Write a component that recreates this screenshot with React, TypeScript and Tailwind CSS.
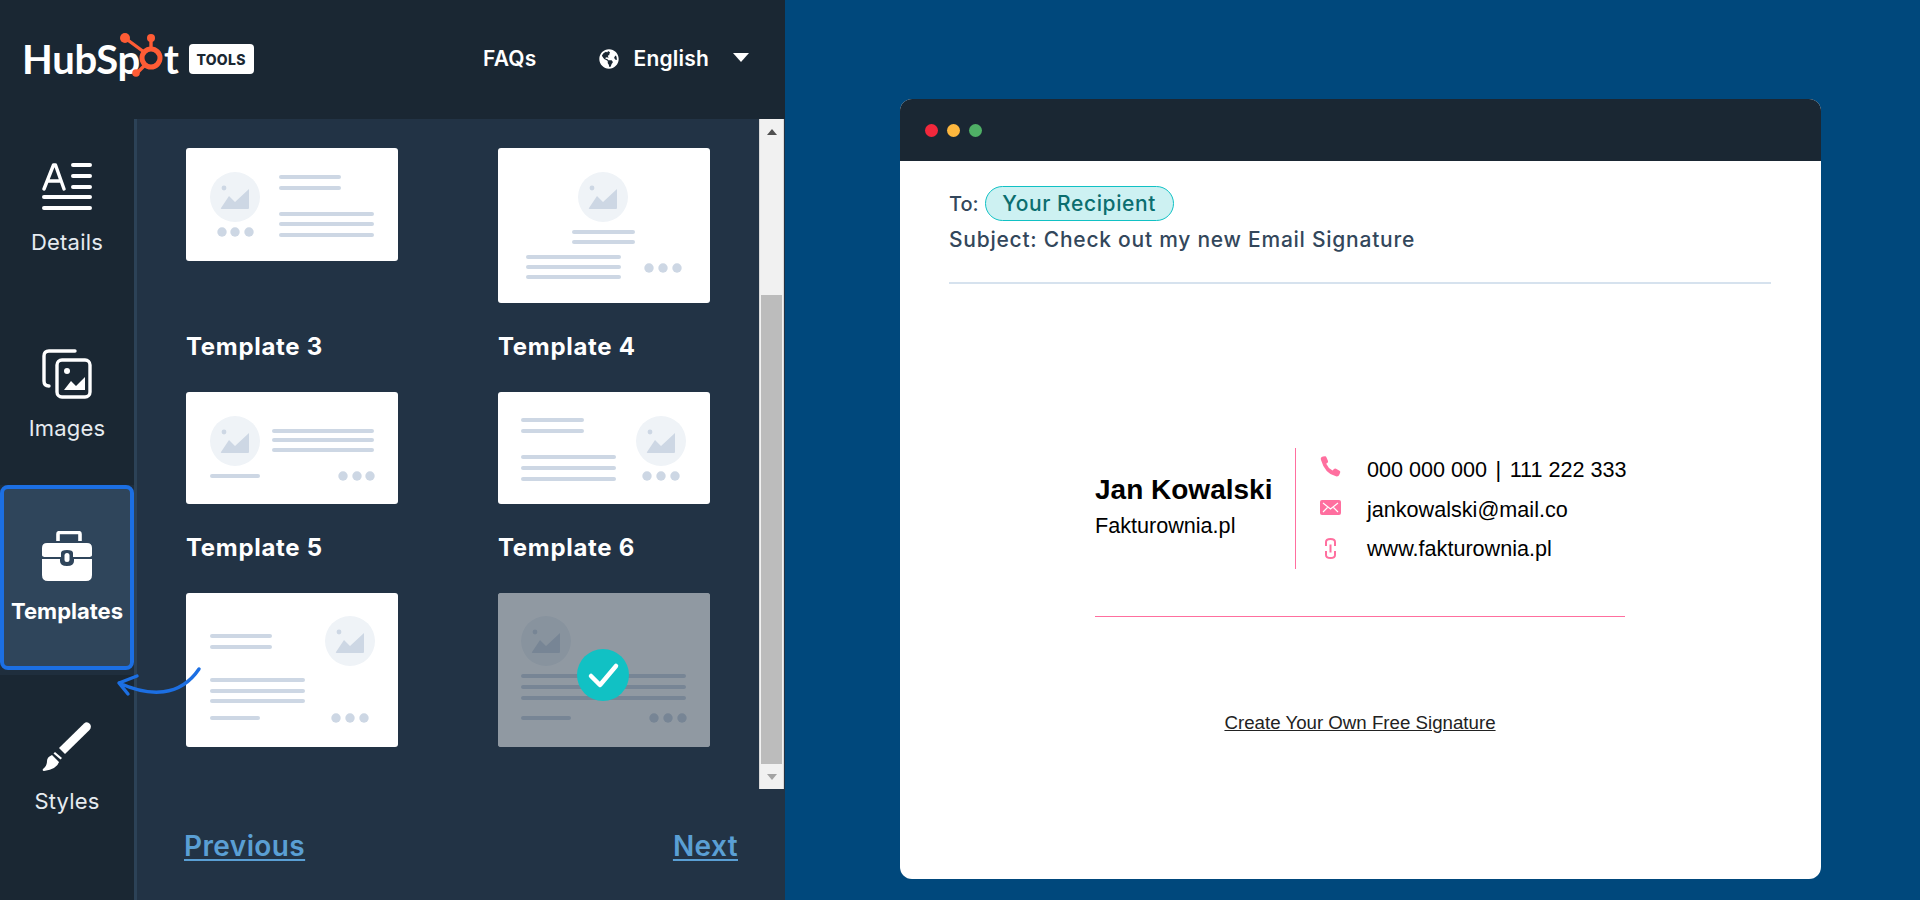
import { FaGlobeAmericas } from 'react-icons/fa'

const LINE = '#cdd7e4'

interface Bar { x1: number; x2: number; y: number }

interface Thumb {
  name?: string
  h: number
  circle: number
  circleY: number
  dots: { x: number[]; y: number }
  bars: Bar[]
  selected?: boolean
}

const bars = (x1: number, x2: number, ys: number[]) => ys.map(y => ({ x1, x2, y }))

const thumbs: Thumb[] = [
  {
    h: 113, circle: 49, circleY: 49,
    dots: { x: [36, 49, 63], y: 84 },
    bars: [...bars(93, 155, [29, 40]), ...bars(93, 188, [66, 76, 87])],
  },
  {
    h: 155, circle: 105, circleY: 49,
    dots: { x: [151, 165, 179], y: 120 },
    bars: [...bars(74, 137, [84, 94]), ...bars(28, 123, [109, 119, 129])],
  },
  {
    name: 'Template 3', h: 112, circle: 49, circleY: 49,
    dots: { x: [157, 171, 184], y: 84 },
    bars: [...bars(86, 188, [39, 48, 58]), ...bars(24, 74, [84])],
  },
  {
    name: 'Template 4', h: 112, circle: 163, circleY: 49,
    dots: { x: [149, 163, 177], y: 84 },
    bars: [...bars(23, 86, [28, 39]), ...bars(23, 118, [65, 76, 87])],
  },
  {
    name: 'Template 5', h: 154, circle: 164, circleY: 48,
    dots: { x: [150, 164, 178], y: 125 },
    bars: [...bars(24, 86, [43, 54]), ...bars(24, 119, [87, 98, 108]), ...bars(24, 74, [125])],
  },
  {
    name: 'Template 6', h: 154, circle: 48, circleY: 48, selected: true,
    dots: { x: [156, 170, 184], y: 125 },
    bars: [...bars(23, 188, [83, 94, 105]), ...bars(23, 73, [125])],
  },
]

function ThumbCard({ t }: { t: Thumb }) {
  const cx = t.circle
  const cy = t.circleY
  return (
    <svg width={212} height={t.h} viewBox={`0 0 212 ${t.h}`} className="block rounded-[3px]">
      <rect width={212} height={t.h} fill="#fff" />
      <circle cx={cx} cy={cy} r={25} fill="#eff3f7" />
      <circle cx={cx - 11} cy={cy - 9} r={2.4} fill={LINE} />
      <path d={`M${cx - 14} ${cy + 11} L${cx - 6} ${cy - 1} L${cx} ${cy + 5} L${cx + 14} ${cy - 8} V${cy + 11} Q${cx + 14} ${cy + 12} ${cx + 13} ${cy + 12} H${cx - 13} Q${cx - 15} ${cy + 12} ${cx - 14} ${cy + 11} Z`} fill={LINE} />
      {t.bars.map((b, i) => (
        <rect key={i} x={b.x1} y={b.y - 2} width={b.x2 - b.x1} height={4} rx={2} fill={LINE} />
      ))}
      {t.dots.x.map(x => (
        <circle key={x} cx={x} cy={t.dots.y} r={4.7} fill={LINE} />
      ))}
      {t.selected && (
        <>
          <rect width={212} height={t.h} fill="#213345" fillOpacity={0.5} />
          <circle cx={105} cy={82} r={26} fill="#11c1c4" />
          <path d="M93 83 L102 92 L118 73" fill="none" stroke="#fff" strokeWidth={4.5} strokeLinecap="round" strokeLinejoin="round" />
        </>
      )}
    </svg>
  )
}

function Logo() {
  return (
    <div className="flex items-center">
      <div className="relative flex items-center text-[40px] leading-[38px] font-bold text-white tracking-[-0.3px] [font-family:Lato,sans-serif]">
        <span>HubSp</span>
        <span className="w-[24px]" />
        <span>t</span>
        <svg width={50} height={54} viewBox="0 0 50 54" className="absolute left-[98px] top-[-14px]" fill="none">
          <circle cx={31} cy={32} r={9} stroke="#ff5c35" strokeWidth={5} />
          <path d="M5 12 L24 26 M31 12 V22 M17 47 L25 39" stroke="#ff5c35" strokeWidth={3.4} />
          <circle cx={5} cy={12} r={5} fill="#ff5c35" />
          <circle cx={31} cy={12} r={4} fill="#ff5c35" />
          <circle cx={16} cy={47} r={3.8} fill="#ff5c35" />
        </svg>
      </div>
      <span className="ml-[10px] w-[65px] h-[30px] rounded-[4px] bg-white text-[#1a2733] text-[14px] font-extrabold tracking-[0.3px] flex items-center justify-center">
        TOOLS
      </span>
    </div>
  )
}

function DetailsIcon() {
  return (
    <svg width={50} height={50} viewBox="0 0 50 50" fill="none" stroke="#fff" strokeWidth={3.4} strokeLinecap="round" strokeLinejoin="round">
      <path d="M2 26 L11.5 2 H13.5 L22 26 M6 18 H18.5" />
      <path d="M31 2 H48 M31 13 H48 M31 24 H48 M2 34 H48 M2 45 H48" strokeWidth={4} />
    </svg>
  )
}

function ImagesIcon() {
  return (
    <svg width={50} height={50} viewBox="0 0 50 50" fill="none">
      <path d="M33 2 H7 Q2 2 2 7 V32 Q2 37 7 37" stroke="#fff" strokeWidth={3.4} strokeLinecap="round" />
      <rect x={15} y={11} width={33} height={37} rx={5} stroke="#fff" strokeWidth={3.4} />
      <circle cx={25} cy={22} r={3} fill="#fff" />
      <path d="M22 41 L29 32 L34 37 L43 28 V41 Z" fill="#fff" />
    </svg>
  )
}

function BriefcaseIcon() {
  return (
    <svg width={50} height={50} viewBox="0 0 50 50" fill="none">
      <path d="M16 10 V3 Q16 1.5 18 1.5 H36 Q38 1.5 38 3 V10" stroke="#fff" strokeWidth={3.6} />
      <path d="M5 12 H45 Q50 12 50 17 V24 Q50 26 46 26 H31 V22 Q31 19 25 19 Q19 19 19 22 V26 H4 Q0 26 0 24 V17 Q0 12 5 12 Z" fill="#fff" />
      <path d="M0 28 H18 V30 Q18 35 25 35 Q32 35 32 30 V28 H50 V44 Q50 50 44 50 H6 Q0 50 0 44 Z" fill="#fff" />
      <rect x={22.5} y={22} width={5} height={9} rx={2.5} fill="#fff" />
    </svg>
  )
}

function BrushIcon() {
  return (
    <svg width={50} height={50} viewBox="0 0 50 50" fill="none">
      <path d="M17 26 L42 1.5 Q45 -1 48 2 Q50 5 47.5 8 L23 32 Z" fill="#fff" />
      <path d="M13 30 L20 36 L18.5 37.5 L11.5 31.5 Z" fill="#fff" />
      <path d="M10 33 L17 40 Q15 47 2 49 Q0 49 1 47 Q5 44 5 39 Q5 35 10 33 Z" fill="#fff" />
    </svg>
  )
}

function SideItem({ icon, label, className }: { icon: React.ReactNode; label: string; className: string }) {
  return (
    <div className={`flex flex-col items-center ${className}`}>
      {icon}
      <span className="mt-[14px] text-[22px] leading-[30px] tracking-[0.2px] text-[#e6ebf0] font-normal">{label}</span>
    </div>
  )
}

function Sidebar() {
  return (
    <div className="w-[137px] shrink-0 border-r-[3px] border-[#2c4257] flex flex-col">
      <SideItem icon={<DetailsIcon />} label="Details" className="h-[183px] pt-[44px]" />
      <SideItem icon={<ImagesIcon />} label="Images" className="h-[183px] pt-[47px]" />
      <div className="h-[190px] bg-[#1f2e3d]">
        <div className="h-[185px] rounded-[8px] border-[4px] border-[#1c6fe3] bg-[#2f455b] flex flex-col items-center pt-[42px]">
          <BriefcaseIcon />
          <span className="mt-[15px] text-[22px] leading-[30px] font-bold text-white">Templates</span>
        </div>
      </div>
      <SideItem icon={<BrushIcon />} label="Styles" className="pt-[47px]" />
    </div>
  )
}

function Scrollbar() {
  return (
    <div className="w-[25px] h-[670px] mr-[1px] shrink-0 bg-[#f1f1f1] flex flex-col items-center border-x border-[#d8d8d8]">
      <div className="h-[25px] flex items-center justify-center">
        <span className="border-x-[5px] border-x-transparent border-b-[6px] border-b-[#505050]" />
      </div>
      <div className="flex-1 w-full px-[1px] pt-[151px]">
        <div className="h-full bg-[#bcbcbc]" />
      </div>
      <div className="h-[25px] flex items-center justify-center">
        <span className="border-x-[5px] border-x-transparent border-t-[6px] border-t-[#a3a3a3]" />
      </div>
    </div>
  )
}

function TemplatesPanel() {
  return (
    <div className="flex-1 bg-[#223345] flex flex-col">
      <div className="flex items-start">
        <div className="flex-1 h-[670px] overflow-hidden pl-[49px] pt-[29px]">
          <div className="grid grid-cols-[212px_212px] gap-x-[100px] items-start">
            {thumbs.map((t, i) => (
              <div key={i}>
                {t.name && (
                  <h3 className="text-[24px] leading-[30px] font-bold text-white tracking-[0.7px] mt-[29px] mb-[30px]">
                    {t.name}
                  </h3>
                )}
                <ThumbCard t={t} />
              </div>
            ))}
          </div>
        </div>
        <Scrollbar />
      </div>
      <div className="flex justify-between pl-[47px] pr-[47px] pt-[39px] text-[28px] leading-[36px] font-semibold tracking-[0.4px] text-[#5a9fd4]">
        <a className="underline underline-offset-[3px]">Previous</a>
        <a className="underline underline-offset-[3px]">Next</a>
      </div>
    </div>
  )
}

function LeftPanel() {
  return (
    <div className="relative w-[785px] shrink-0 bg-[#1a2733] flex flex-col">
      <header className="h-[119px] shrink-0 flex items-center pl-[22px] pr-[36px] text-white text-[21px] font-semibold tracking-[0.2px] pb-[1px]">
        <Logo />
        <a className="ml-auto">FAQs</a>
        <FaGlobeAmericas className="ml-[62px] w-[20px] h-[20px]" />
        <span className="ml-[15px]">English</span>
        <span className="ml-[24px] mb-[3px] border-x-[8px] border-x-transparent border-t-[9px] border-t-white" />
      </header>
      <div className="flex flex-1 min-h-0">
        <Sidebar />
        <TemplatesPanel />
      </div>
      {/* arrow from the hint to the Templates tab */}
      <svg width={100} height={40} viewBox="0 0 100 40" fill="none" className="absolute left-[110px] top-[662px]">
        <path d="M89 7 C70 35 40 35 9 21 M27 14 L9 21 L18 32" stroke="#1c6fe3" strokeWidth={3.4} strokeLinecap="round" strokeLinejoin="round" />
      </svg>
    </div>
  )
}

function PhoneIcon() {
  return (
    <svg width={21} height={21} viewBox="0 0 21 21">
      <path d="M1 4 Q0 1 3 0.5 L5 0.2 Q6 0 6.5 1.5 L8 5 Q8.3 6 7.5 6.7 L6.2 7.8 Q8 12 12.5 14.5 L14 13 Q15 12.3 16 12.8 L19.5 14.7 Q20.6 15.4 20.2 16.5 L19.4 18.5 Q18.5 20.8 16 20.3 Q5 18 1 4 Z" fill="#ff6f9f" />
    </svg>
  )
}

function MailIcon() {
  return (
    <svg width={21} height={15} viewBox="0 0 21 15">
      <rect width={21} height={15} rx={2} fill="#ff6f9f" />
      <path d="M3 3 L10.5 9 L18 3 M3 12 L7.5 7.5 M18 12 L13.5 7.5" stroke="#fff" strokeWidth={1.2} fill="none" />
    </svg>
  )
}

function LinkIcon() {
  return (
    <svg width={11} height={21} viewBox="0 0 11 21" fill="none" stroke="#ff6f9f" strokeWidth={2}>
      <path d="M1 8 V4 Q1 1 5.5 1 Q10 1 10 4 V8 M1 13 V17 Q1 20 5.5 20 Q10 20 10 17 V13 M5.5 6.5 V14.5" />
    </svg>
  )
}

function Signature() {
  const rows = [
    { icon: <PhoneIcon />, text: <>000 000 000 <span className="mx-[2.5px]">|</span> 111 222 333</>, nudge: 'mt-[-6px]' },
    { icon: <MailIcon />, text: 'jankowalski@mail.co', nudge: 'mt-[-4px]' },
    { icon: <LinkIcon />, text: 'www.fakturownia.pl', nudge: 'mt-[-2px]' },
  ]
  return (
    <div className="w-[530px] [font-family:'Liberation_Sans',sans-serif] text-black">
      <div className="flex h-[121px]">
        <div className="w-[200px] shrink-0 flex flex-col pt-[25px]">
          <div className="text-[28px] leading-[34px] font-bold whitespace-nowrap">Jan Kowalski</div>
          <div className="mt-[5px] text-[21.6px] leading-[28px]">Fakturownia.pl</div>
        </div>
        <div className="w-[1px] shrink-0 bg-[#ff6f9f]" />
        <div className="flex flex-col pl-[24px] pt-[2px]">
          {rows.map((r, i) => (
            <div key={i} className="h-[40px] flex items-center">
              <span className={`w-[21px] flex justify-center ${r.nudge}`}>{r.icon}</span>
              <span className="ml-[26px] text-[21.6px] leading-[30px] whitespace-nowrap">{r.text}</span>
            </div>
          ))}
        </div>
      </div>
      <div className="mt-[47px] h-[1px] bg-[#ff6f9f]" />
    </div>
  )
}

function EmailPreview() {
  return (
    <div className="flex-1 bg-[#00487c] pl-[115px] pt-[99px]">
      <div className="w-[921px] h-[780px] rounded-[12px] bg-white overflow-hidden flex flex-col">
        <div className="h-[62px] shrink-0 bg-[#1a2733] flex items-center gap-[9px] pl-[25px]">
          <span className="w-[13px] h-[13px] rounded-full bg-[#f2283c]" />
          <span className="w-[13px] h-[13px] rounded-full bg-[#fdb73e]" />
          <span className="w-[13px] h-[13px] rounded-full bg-[#4fb066]" />
        </div>
        <div className="pl-[49px] pr-[50px] flex-1 flex flex-col">
          <div className="mt-[25px] flex items-center h-[35px] text-[20px] text-[#33475b]">
            <span className="font-medium">To:</span>
            <span className="ml-[6px] h-[35px] w-[189px] rounded-[18px] border border-[#11c1c4] bg-[#cdf1f2] text-[#0b6e6f] text-[21px] tracking-[0.6px] font-medium flex items-center justify-center">
              Your Recipient
            </span>
          </div>
          <div className="mt-[2px] text-[21px] leading-[34px] tracking-[0.75px] font-medium text-[#33475b]">Subject: Check out my new Email Signature</div>
          <div className="mt-[25px] h-[2px] bg-[#d6e2ee]" />
          <div className="flex justify-center mt-[164px]">
            <Signature />
          </div>
          <a className="mt-[92px] self-center text-[18.7px] leading-[28px] text-[#222] underline [font-family:'Liberation_Sans',sans-serif]">
            Create Your Own Free Signature
          </a>
        </div>
      </div>
    </div>
  )
}

export default function App() {
  return (
    <div className="flex w-[1920px] h-[900px] overflow-hidden [font-family:Inter,sans-serif]">
      <LeftPanel />
      <EmailPreview />
    </div>
  )
}
